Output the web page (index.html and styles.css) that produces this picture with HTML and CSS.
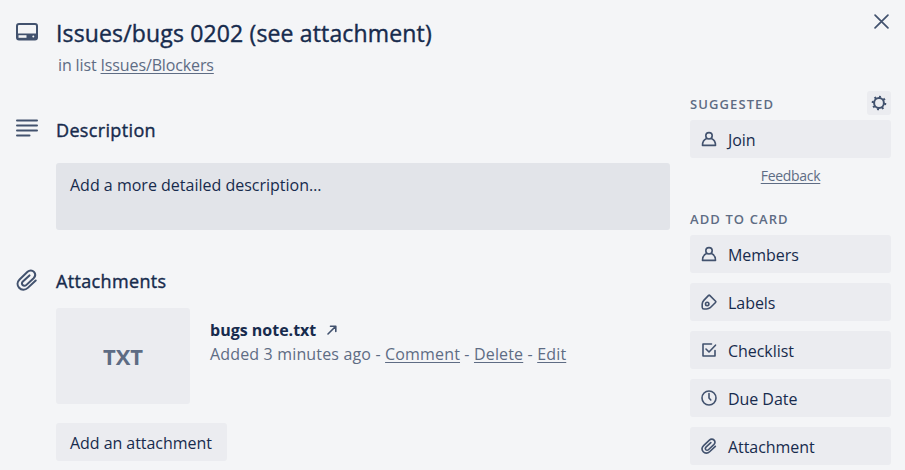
FILE: index.html
```html
<!DOCTYPE html>
<html lang="en">
<head>
<meta charset="utf-8">
<title>Issues/bugs 0202 (see attachment)</title>
<link rel="stylesheet" href="styles.css">
</head>
<body>
<svg class="defs" aria-hidden="true">
  <symbol id="person" viewBox="0 0 16 16"><circle cx="8" cy="4.8" r="3.2"/><path d="M5.6 7.6C3 8.6 1.5 10.8 1.5 14.4H14.5C14.5 10.8 13 8.6 10.4 7.6"/></symbol>
  <symbol id="clip" viewBox="0 0 24 24"><path d="M21.5 12.5L12.9 20.6C9.9 23.5 5.8 23.2 3.4 20.5C1 17.8 1.2 14.1 3.9 11.4L12.6 3.1C14.7 1.1 17.8 1.2 19.6 3.2C21.4 5.3 21.1 8.1 19.2 10L11.1 17.6C9.9 18.7 8.2 18.6 7.2 17.5C6.2 16.3 6.4 14.8 7.5 13.7L14.7 7"/></symbol>
</svg>
<main class="card">
  <button class="close" aria-label="Close"><svg viewBox="0 0 14 14"><path d="M1 1L13 13M13 1L1 13"/></svg></button>
  <section class="content">
    <header class="row title-row">
      <svg class="icon" viewBox="0 0 22 18"><rect x="1" y="1" width="20" height="15.5" rx="2"/><path class="solid" d="M1 10.5H21V15Q21 17 19 17H3Q1 17 1 15Z"/><path class="cut" d="M2.5 12.2H10.5V14.8H2.5Z"/><circle class="cut" cx="17.3" cy="13.6" r="1"/></svg>
      <h1>Issues/bugs 0202 (see attachment)</h1>
    </header>
    <p class="sub">in list <a>Issues/Blockers</a></p>
    <div class="row desc-row">
      <svg class="icon" viewBox="0 0 22 18"><path d="M1 1.5H21M1 6.5H21M1 11.5H21M1 16.5H13.5"/></svg>
      <h2 class="t-desc">Description</h2>
    </div>
    <div class="desc">Add a more detailed description…</div>
    <div class="row att-row">
      <svg class="icon clip"><use href="#clip"/></svg>
      <h2 class="t-att">Attachments</h2>
    </div>
    <div class="attachment">
      <div class="thumb">TXT</div>
      <div class="info">
        <div class="name"><span>bugs note.txt</span><svg viewBox="0 0 10 10"><path d="M1 9L8.5 1.5M3.5 1.3H8.8V6.5"/></svg></div>
        <div class="meta">Added 3 minutes ago - <a>Comment</a> - <a>Delete</a> - <a>Edit</a></div>
      </div>
    </div>
    <button class="btn add"><span>Add an attachment</span></button>
  </section>
  <aside class="side">
    <div class="side-head"><h3 class="t-sug">SUGGESTED</h3><button class="gear" aria-label="Settings"><svg viewBox="0 0 16 16"><circle cx="8" cy="8" r="4.9"/><circle class="teeth" cx="8" cy="8" r="6.1" pathLength="80"/></svg></button></div>
    <button class="btn"><svg><use href="#person"/></svg><span>Join</span></button>
    <a class="feedback">Feedback</a>
    <h3 class="t-add">ADD TO CARD</h3>
    <div class="list">
      <button class="btn"><svg><use href="#person"/></svg><span>Members</span></button>
      <button class="btn"><svg viewBox="0 0 16 16"><path d="M8.7 1.4L14.6 7.3Q15.1 7.9 14.5 8.5L9.2 13.7Q7.7 15 5.5 15H3Q1.3 15 1.2 13.2V10.1Q1.3 8 2.8 6.4L7.6 1.4Q8.2.9 8.7 1.4Z"/><circle cx="6.2" cy="9.9" r="1.7"/></svg><span>Labels</span></button>
      <button class="btn"><svg viewBox="0 0 16 16"><path d="M10.5 2H2V14H14V8.5M5 7L8 10L14.5 3.2"/></svg><span>Checklist</span></button>
      <button class="btn"><svg viewBox="0 0 16 16"><circle cx="8" cy="8" r="7"/><path d="M8 3.5V8L9.8 10"/></svg><span>Due Date</span></button>
      <button class="btn small-clip"><svg><use href="#clip"/></svg><span>Attachment</span></button>
    </div>
  </aside>
</main>
</body>
</html>
```
FILE: styles.css
```css
* { box-sizing: border-box; }
body { margin: 0; width: 905px; height: 470px; overflow: hidden; background: #f4f5f7; color: #172b4d; font: 400 16px/20px "Open Sans", "Noto Sans", sans-serif; }
h1, h2, h3, p { margin: 0; white-space: nowrap; }
button { border: 0; padding: 0; font: inherit; color: inherit; }
a { text-decoration: underline; text-underline-offset: 2px; text-decoration-thickness: 1px; }
svg { fill: none; stroke: #42526e; stroke-width: 1.6; stroke-linecap: round; stroke-linejoin: round; flex: none; }
.defs { display: none; }
.card { position: relative; display: grid; grid-template-columns: 614px 201px; column-gap: 20px; padding-left: 56px; height: 470px; }
.close { position: absolute; left: 874px; top: 14px; width: 15px; height: 15px; background: none; }
.close svg { display: block; width: 15px; height: 15px; }
.row { display: flex; align-items: flex-start; margin-left: -40px; gap: 18px; }
.icon { width: 22px; height: 18px; stroke-width: 2; }
.solid { fill: #42526e; stroke: none; }
.cut { fill: #f4f5f7; stroke: none; }
.title-row { padding-top: 19px; }
.title-row .icon { margin-top: 4px; }
h1 { font-size: 23px; line-height: 28px; font-weight: 400; letter-spacing: .15px; -webkit-text-stroke: .4px currentColor; }
.sub { margin: 8px 0 0 2px; color: #5e6c84; letter-spacing: -.13px; }
.desc-row { margin-top: 43px; }
.desc-row .icon { margin-top: 1px; }
h2 { font-size: 18px; line-height: 24px; font-weight: 400; letter-spacing: .35px; -webkit-text-stroke: .4px currentColor; }
.desc { margin-top: 21px; height: 67px; padding: 12px 14px; background: #e2e4e9; border-radius: 3px; letter-spacing: 0; }
.att-row { margin-top: 39px; }
.clip { height: 24px; margin-top: -1px; stroke-width: 2.2; }
.attachment { display: flex; gap: 20px; margin-top: 15px; }
.thumb { width: 134px; height: 96px; border-radius: 3px; background: #ebecf0; color: #5e6c84; font-weight: 700; font-size: 22px; display: flex; align-items: center; justify-content: center; }
.info { padding-top: 10px; white-space: nowrap; }
.name { display: flex; align-items: center; gap: 11px; height: 24px; font-weight: 700; letter-spacing: 0; }
.name svg { width: 10px; height: 10px; }
.meta { line-height: 24px; color: #5e6c84; letter-spacing: .16px; }
.btn { display: flex; align-items: center; gap: 11px; width: 201px; height: 38px; padding: 2px 0 0 11px; background: #ebecf0; border-radius: 3px; letter-spacing: -.05px; white-space: nowrap; }
.btn svg { width: 16px; height: 16px; margin-top: -3px; }
.add { width: 171px; margin-top: 19px; padding-left: 14px; }
.small-clip svg { stroke-width: 2.4; }
.side { display: flex; flex-direction: column; padding-top: 91px; }
.side-head { display: flex; justify-content: space-between; height: 29px; }
h3 { font-size: 13px; line-height: 20px; font-weight: 600; color: #5e6c84; letter-spacing: 1.1px; }
.t-sug { padding-top: 3px; }
.gear { width: 24px; height: 24px; border-radius: 3px; background: #ebecf0; display: flex; align-items: center; justify-content: center; }
.gear svg { width: 16px; height: 16px; stroke-width: 2; }
.gear .teeth { stroke-dasharray: 4 6; stroke-linecap: butt; stroke-width: 2.4; }
.feedback { align-self: center; margin-top: 8px; font-size: 14px; color: #5e6c84; letter-spacing: -.3px; }
.t-add { margin-top: 23px; }
.list { display: flex; flex-direction: column; gap: 10px; margin-top: 6px; }
```
